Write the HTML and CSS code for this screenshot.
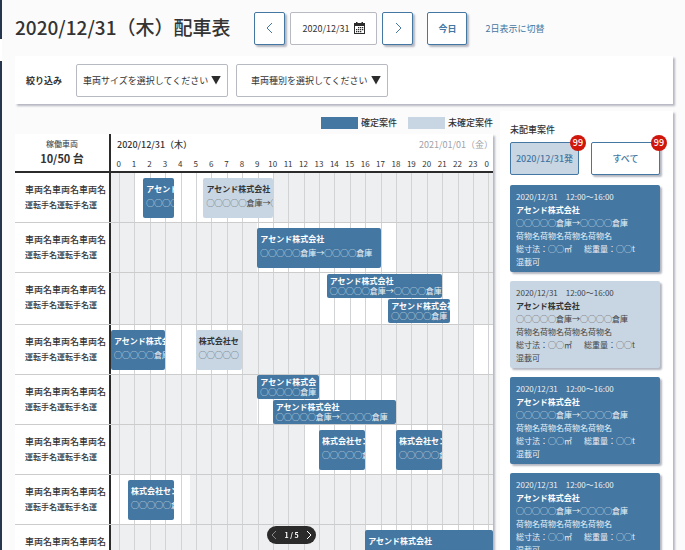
FILE: index.html
```
<!DOCTYPE html>
<html lang="ja">
<head>
	<meta charset="UTF-8">
	<title>配車表</title>
	<link rel="stylesheet" href="styles.css">
</head>

<body>

<div class="side">
	<div class="side-logo"></div>
	<div class="side-current"></div>
	<div class="side-menu"></div>
</div>

<main class="page">
	<header class="header">
		<h1 class="title">2020/12/31（木）配車表</h1>
		<button class="btn btn-arrow" type="button" aria-label="前の日">
			<svg width="8" height="12" viewBox="0 0 8 12"><path d="M6 1 1 6l5 5"/></svg>
		</button>
		<label class="date-box">
			<input type="text" value="2020/12/31" aria-label="日付">
			<svg class="calendar" width="11" height="12" viewBox="0 0 11 12">
				<path fill-rule="evenodd" d="M0 1h2V0h1.500v1h4V0H9v1h2v11H0zM1 4v7h9V4z"/>
				<path d="M4 5h1.300v1.300H4zM6 5h1.300v1.300H6zM8 5h1.300v1.300H8zM2 7h1.300v1.300H2zM4 7h1.300v1.300H4zM6 7h1.300v1.300H6zM8 7h1.300v1.300H8zM2 9h1.300v1.300H2zM4 9h1.300v1.300H4zM6 9h1.300v1.300H6z"/>
			</svg>
		</label>
		<button class="btn btn-arrow" type="button" aria-label="次の日">
			<svg width="8" height="12" viewBox="0 0 8 12"><path d="m2 1 5 5-5 5"/></svg>
		</button>
		<button class="btn btn-today" type="button">今日</button>
		<a class="switch" href="#">2日表示に切替</a>
	</header>

	<section class="filter">
		<h2 class="filter-title">絞り込み</h2>
		<div class="select-box">
			<select aria-label="車両サイズ"><option>車両サイズを選択してください</option></select>
			<span class="triangle"></span>
		</div>
		<div class="select-box select-type">
			<select aria-label="車両種別"><option>車両種別を選択してください</option></select>
			<span class="triangle"></span>
		</div>
	</section>

	<div class="content">
		<section class="schedule">
			<div class="legend">
				<span class="swatch fixed"></span>確定案件
				<span class="swatch pending"></span>未確定案件
			</div>

			<div class="board">
				<div class="row board-head">
					<div class="count">
						<p class="count-label">稼働車両</p>
						<p class="count-value">10/50 台</p>
					</div>
					<div>
						<div class="days"><strong>2020/12/31（木）</strong><span>2021/01/01（金）</span></div>
						<div class="hours">
							<span>0</span><span>1</span><span>2</span><span>3</span><span>4</span><span>5</span><span>6</span><span>7</span><span>8</span><span>9</span><span>10</span><span>11</span><span>12</span><span>13</span><span>14</span><span>15</span><span>16</span><span>17</span><span>18</span><span>19</span><span>20</span><span>21</span><span>22</span><span>23</span><span>0</span>
						</div>
					</div>
				</div>

				<!-- one column = 6 minutes, 0:00 is line 6 -->
				<div class="row">
					<div class="car"><p>車両名車両名車両名</p><p class="driver">運転手名運転手名運</p></div>
					<div class="lane">
						<div class="open" style="grid-column: 16 / 106"></div>
						<div class="job fixed" style="grid-column: 22 / 42"><b>アセンド</b><p>◯◯◯◯</p></div>
						<div class="job pending" style="grid-column: 61 / 106"><b>アセンド株式会社</b><p>◯◯◯◯◯倉庫→◯</p></div>
					</div>
				</div>
				<div class="row">
					<div class="car"><p>車両名車両名車両名</p><p class="driver">運転手名運転手名運</p></div>
					<div class="lane">
						<div class="open" style="grid-column: 96 / 186"></div>
						<div class="job fixed" style="grid-column: 96 / 176"><b>アセンド株式会社</b><p>◯◯◯◯◯倉庫→◯◯◯◯倉庫</p></div>
					</div>
				</div>
				<div class="row row-tall">
					<div class="car"><p>車両名車両名車両名</p><p class="driver">運転手名運転手名運</p></div>
					<div class="lane stacked">
						<div class="open" style="grid-column: 136 / 226"></div>
						<div class="job fixed" style="grid-column: 141 / 216"><b>アセンド株式会社</b><p>◯◯◯◯◯倉庫→◯◯◯◯倉庫</p></div>
						<div class="job fixed lower" style="grid-column: 181 / 221"><b>アセンド株式会社</b><p>◯◯◯◯◯倉庫</p></div>
					</div>
				</div>
				<div class="row">
					<div class="car"><p>車両名車両名車両名</p><p class="driver">運転手名運転手名運</p></div>
					<div class="lane">
						<div class="open" style="grid-column: 1 / 86"></div>
						<div class="open" style="grid-column: 236 / 249"></div>
						<div class="job fixed" style="grid-column: 1 / 36"><b>アセンド株式会</b><p>◯◯◯◯◯倉庫</p></div>
						<div class="job pending" style="grid-column: 56 / 86"><b>株式会社セ</b><p>◯◯◯◯◯</p></div>
					</div>
				</div>
				<div class="row">
					<div class="car"><p>車両名車両名車両名</p><p class="driver">運転手名運転手名運</p></div>
					<div class="lane stacked">
						<div class="open" style="grid-column: 96 / 186"></div>
						<div class="job fixed" style="grid-column: 96 / 136"><b>アセンド株式会</b><p>◯◯◯◯◯倉庫</p></div>
						<div class="job fixed lower" style="grid-column: 106 / 186"><b>アセンド株式会社</b><p>◯◯◯◯◯倉庫→◯◯◯◯倉庫</p></div>
					</div>
				</div>
				<div class="row">
					<div class="car"><p>車両名車両名車両名</p><p class="driver">運転手名運転手名運</p></div>
					<div class="lane">
						<div class="open" style="grid-column: 126 / 216"></div>
						<div class="job fixed" style="grid-column: 136 / 166"><b>株式会社セン</b><p>◯◯◯◯◯倉</p></div>
						<div class="job fixed" style="grid-column: 186 / 216"><b>株式会社セン</b><p>◯◯◯◯◯倉</p></div>
					</div>
				</div>
				<div class="row">
					<div class="car"><p>車両名車両名車両名</p><p class="driver">運転手名運転手名運</p></div>
					<div class="lane">
						<div class="open" style="grid-column: 1 / 52"></div>
						<div class="job fixed" style="grid-column: 12 / 42"><b>株式会社セン</b><p>◯◯◯◯◯倉</p></div>
					</div>
				</div>
				<div class="row">
					<div class="car"><p>車両名車両名車両名</p><p class="driver">運転手名運転手名運</p></div>
					<div class="lane">
						<div class="open" style="grid-column: 166 / 249"></div>
						<div class="job fixed" style="grid-column: 166 / 249"><b>アセンド株式会社</b><p>◯◯◯◯◯倉庫→◯◯◯◯倉庫</p></div>
					</div>
				</div>
			</div>
		</section>

		<aside class="waiting">
			<h2 class="waiting-title">未配車案件</h2>
			<div class="tabs">
				<button class="btn tab active" type="button">2020/12/31発<span class="badge">99</span></button>
				<button class="btn tab" type="button">すべて<span class="badge">99</span></button>
			</div>
			<article class="card fixed">
				<p>2020/12/31　12:00〜16:00</p>
				<h3>アセンド株式会社</h3>
				<p>◯◯◯◯◯倉庫→◯◯◯◯倉庫</p>
				<p>荷物名荷物名荷物名荷物名</p>
				<p class="size"><span>総寸法：◯◯㎡</span><span>総重量：◯◯t</span></p>
				<p>混載可</p>
			</article>
			<article class="card pending">
				<p>2020/12/31　12:00〜16:00</p>
				<h3>アセンド株式会社</h3>
				<p>◯◯◯◯◯倉庫→◯◯◯◯倉庫</p>
				<p>荷物名荷物名荷物名荷物名</p>
				<p class="size"><span>総寸法：◯◯㎡</span><span>総重量：◯◯t</span></p>
				<p>混載可</p>
			</article>
			<article class="card fixed">
				<p>2020/12/31　12:00〜16:00</p>
				<h3>アセンド株式会社</h3>
				<p>◯◯◯◯◯倉庫→◯◯◯◯倉庫</p>
				<p>荷物名荷物名荷物名荷物名</p>
				<p class="size"><span>総寸法：◯◯㎡</span><span>総重量：◯◯t</span></p>
				<p>混載可</p>
			</article>
			<article class="card fixed">
				<p>2020/12/31　12:00〜16:00</p>
				<h3>アセンド株式会社</h3>
				<p>◯◯◯◯◯倉庫→◯◯◯◯倉庫</p>
				<p>荷物名荷物名荷物名荷物名</p>
				<p class="size"><span>総寸法：◯◯㎡</span><span>総重量：◯◯t</span></p>
				<p>混載可</p>
			</article>
		</aside>
	</div>
</main>

<div class="pager">
	<button type="button" aria-label="前のページ" disabled><svg width="6" height="8" viewBox="0 0 6 8"><path d="M5 0 1 4l4 4"/></svg></button>
	<span>1 / 5</span>
	<button type="button" aria-label="次のページ"><svg width="6" height="8" viewBox="0 0 6 8"><path d="m1 0 4 4-4 4"/></svg></button>
</div>

</body>
</html>
```
FILE: styles.css
```
:root {
	--blue: #4477a2;
	--pale: #c8d6e3;
	--dark: #2b2b2b;
	--shadow: #b4b6c0;
}

* {
	box-sizing: border-box;
}

body {
	display: flex;
	height: 100vh;
	margin: 0;
	overflow: hidden;
	background: #fbfbfb;
	color: #333;
	font-family: "Noto Sans CJK JP", sans-serif;
	font-size: 9px;
	line-height: 15px;
}

h1, h2, h3, p {
	margin: 0;
	font-size: inherit;
}

button, input, select {
	font: inherit;
	color: inherit;
}

svg {
	flex: none;
	display: block;
}

/* left edge of the side menu */
.side {
	display: flex;
	flex-direction: column;
	flex: none;
	width: 2px;
	background: #27364f;
}

.side-logo {
	height: 39px;
}

.side-current {
	height: 22px;
	background: #fff;
}

.page {
	display: flex;
	flex-direction: column;
	flex: 1;
	min-width: 0;
	padding: 0 12px 0 13px;
}

/* header */
.header {
	display: flex;
	align-items: center;
	flex: none;
	height: 56px;
	white-space: nowrap;
}

.title {
	margin-right: 24px;
	padding-bottom: 2px;
	font-size: 19px;
	font-weight: 500;
	line-height: 28px;
}

.btn {
	display: flex;
	align-items: center;
	justify-content: center;
	height: 33px;
	padding: 0;
	border: 1px solid var(--blue);
	border-radius: 2px;
	background: #fff;
	box-shadow: 2px 2px 2px var(--shadow);
	color: var(--blue);
	font-weight: 500;
}

.btn-arrow {
	width: 31px;
}

.btn-arrow path,
.pager path {
	fill: none;
	stroke: currentColor;
}

.date-box {
	display: flex;
	align-items: center;
	gap: 4px;
	width: 87px;
	height: 33px;
	margin: 0 5px;
	padding: 0 11px;
	border: 1px solid #b8bac2;
	border-radius: 2px;
	background: #fff;
}

.date-box input {
	flex: 1;
	min-width: 0;
	padding: 0;
	border: 0;
	background: none;
}

.calendar {
	fill: var(--dark);
}

.btn-today {
	width: 40px;
	margin: 0 18px 0 14px;
	font-weight: 700;
}

.switch {
	color: var(--blue);
	text-decoration: none;
}

/* filter */
.filter {
	display: flex;
	align-items: center;
	flex: none;
	gap: 8px;
	height: 48px;
	padding: 0 11px;
	background: #fff;
	box-shadow: 2px 2px 2px var(--shadow);
}

.filter-title {
	width: 42px;
	font-weight: 700;
	white-space: nowrap;
}

.select-box {
	display: flex;
	align-items: center;
	width: 152px;
	height: 33px;
	padding: 0 6px;
	border: 1px solid #b8bac2;
	border-radius: 2px;
}

.select-box select {
	flex: 1;
	min-width: 0;
	padding: 0;
	border: 0;
	background: none;
	appearance: none;
}

.select-type select {
	padding-left: 8px;
}

.triangle {
	flex: none;
	width: 10px;
	height: 9px;
	background: var(--dark);
	clip-path: polygon(0 0, 100% 0, 50% 100%);
}

/* schedule */
.content {
	display: flex;
	flex: 1;
	gap: 7px;
	min-height: 0;
	padding-top: 7px;
}

.schedule {
	flex: 1;
	min-width: 0;
}

.legend {
	display: flex;
	align-items: center;
	justify-content: flex-end;
	gap: 3px;
	height: 23px;
	font-weight: 500;
}

.swatch {
	width: 37px;
	height: 12px;
	margin-left: 8px;
}

.fixed {
	background: var(--blue);
	color: #fff;
}

.pending {
	background: var(--pale);
	color: #333;
}

.board {
	background: #fff;
	box-shadow: 2px 2px 2px var(--shadow);
}

.row {
	display: grid;
	grid-template-columns: 96px minmax(0, 1fr);
	height: 50px;
	border-bottom: 1px solid #ccc;
}

.row-tall {
	height: 52px;
}

.board-head {
	height: 39px;
	border-bottom: 2px solid var(--dark);
}

.count,
.car {
	border-right: 2px solid var(--dark);
}

.count {
	padding-top: 2px;
	text-align: center;
}

.count-label {
	font-size: 8px;
}

.count-value {
	font-size: 11px;
	font-weight: 700;
}

.days {
	display: flex;
	justify-content: space-between;
	padding: 3px 0 0 6px;
}

.days strong {
	font-weight: 500;
}

.days span {
	color: #a0a2a8;
}

.hours,
.lane {
	display: grid;
	grid-template-columns: repeat(248, minmax(0, 1fr));
}

.hours {
	padding-top: 4px;
	font-size: 8px;
}

.hours span {
	display: flex;
	grid-column: span 10;
	justify-content: center;
}

.hours span:last-child {
	grid-column: span 8;
}

.car {
	padding: 9px 0 0 10px;
	font-weight: 500;
	white-space: nowrap;
}

.driver {
	font-size: 8px;
}

.lane {
	grid-template-rows: minmax(0, 1fr);
	background: #eeeff0;
}

.lane.stacked {
	grid-template-rows: repeat(2, minmax(0, 1fr));
}

.open {
	grid-row: 1 / -1;
	background: #fff;
}

/* hour lines */
.lane::before {
	content: "";
	grid-area: 1 / 6 / -1 / -1;
	z-index: 1;
	background: repeating-linear-gradient(to right, #d2d3d4 0 1px, transparent 1px calc(100% * 10 / 243));
}

.job {
	grid-row: 1;
	align-self: center;
	z-index: 2;
	height: 40px;
	padding: 4px 0 0 3px;
	overflow: hidden;
	border-radius: 2px;
	font-size: 8px;
	line-height: 14px;
	white-space: nowrap;
}

.job b,
.job p {
	display: block;
}

.job p,
.card p {
	opacity: 0.9;
}

.stacked .job {
	height: 24px;
	padding-top: 2px;
	line-height: 10px;
}

.stacked .lower {
	grid-row: 2;
}

/* waiting jobs */
.waiting {
	flex: none;
	width: 173px;
	padding: 11px 13px 0 10px;
	background: #fff;
	box-shadow: 2px 2px 2px var(--shadow);
	overflow: clip;
	overflow-clip-margin: 4px;
}

.waiting-title {
	margin-bottom: 5px;
	font-weight: 500;
}

.tabs {
	display: flex;
	gap: 12px;
	margin-bottom: 10px;
}

.tab {
	position: relative;
	flex: 1;
	white-space: nowrap;
}

.tab.active {
	background: var(--pale);
	box-shadow: none;
}

.badge {
	position: absolute;
	top: -8px;
	right: -8px;
	width: 16px;
	height: 16px;
	border-radius: 50%;
	background: #d0150b;
	color: #fff;
	line-height: 16px;
	text-align: center;
}

.card {
	margin-bottom: 9px;
	padding: 5px 6px 4px;
	border-radius: 2px;
	box-shadow: 2px 2px 2px var(--shadow);
	font-size: 8px;
	line-height: 13px;
	white-space: nowrap;
}

.size {
	display: flex;
	gap: 12px;
}

/* pager */
.pager {
	position: fixed;
	bottom: 6px;
	left: 267px;
	z-index: 3;
	display: flex;
	align-items: center;
	justify-content: space-between;
	width: 49px;
	height: 18px;
	padding: 0 4px;
	border-radius: 9px;
	background: var(--dark);
	color: #fff;
	font-size: 7px;
	font-weight: 700;
}

.pager button {
	padding: 0;
	border: 0;
	background: none;
}

.pager button:disabled {
	color: #888;
}
```
